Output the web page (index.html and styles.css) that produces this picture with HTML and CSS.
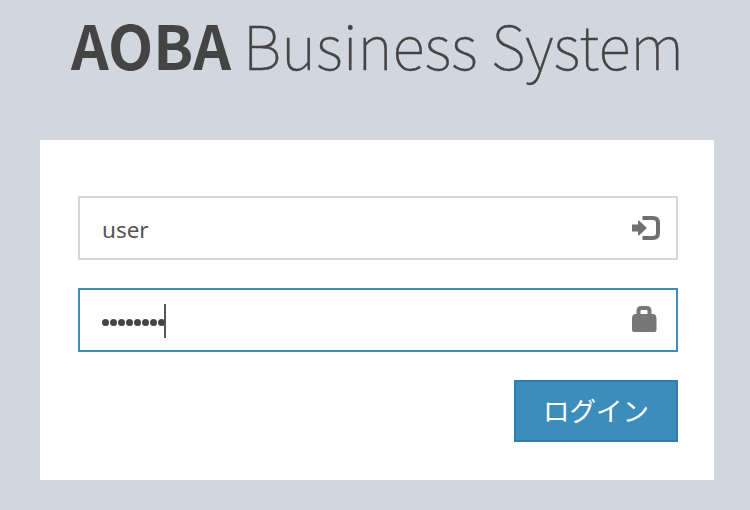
FILE: index.html
```
<!DOCTYPE html>
<html lang="ja">
<head>
<meta charset="utf-8">
<title>AOBA Business System</title>
<link rel="stylesheet" href="styles.css">
</head>
<body>
<main class="login">
  <h1 class="brand"><svg class="brand-text" viewBox="0 0 750 90"><text class="bold" x="71" y="69.500" textLength="160" lengthAdjust="spacingAndGlyphs">AOBA</text><text class="light" x="243" y="69.500" textLength="441" lengthAdjust="spacingAndGlyphs">Business System</text></svg></h1>
  <form class="panel">
    <div class="field">
      <span class="value">user</span>
      <svg class="icon" viewBox="0 0 32 32"><path d="M4 12.500h6V9.500q0-1.500 1.500-.5L19 16l-7.500 7q-1.500 1-1.500-.5v-3H4z" fill="#707070"/><path d="M14.500 6H25q5 0 5 5v10q0 5-5 5H14.500" fill="none" stroke="#707070" stroke-width="4"/></svg>
    </div>
    <div class="field focused">
      <span class="dots"><i></i><i></i><i></i><i></i><i></i><i></i><i></i><i></i></span><span class="caret"></span>
      <svg class="icon" viewBox="0 0 32 32"><path d="M8.500 10V7q0-5 5-5h5q5 0 5 5v3H26q2.500 1 2.500 4v12q0 2-2 2H6q-2 0-2-2V14q0-3 2.500-4zM12.500 10h7V7q0-1-1-1h-5q-1 0-1 1z" fill="#777" fill-rule="evenodd"/></svg>
    </div>
    <button class="submit" type="button"><span class="submit-label">ログイン</span></button>
  </form>
</main>
</body>
</html>
```
FILE: styles.css
```
* { box-sizing: border-box; }
body { margin: 0; background: #d2d6de; font-family: "Noto Sans", "Noto Sans CJK JP", sans-serif; color: #444; }
.login { height: 510px; padding: 0 36px 0 40px; overflow: hidden; }
.brand { margin: 0 -36px 50px -40px; height: 90px; }
.brand-text { display: block; width: 750px; height: 90px; fill: #444; font-family: "Noto Sans CJK JP", sans-serif; font-size: 60.5px; }
.bold { font-weight: 700; }
.light { font-weight: 100; stroke: #444; stroke-width: .4px; }
.panel { height: 340px; padding: 56px 36px 38px 38px; background: #fff; display: flex; flex-direction: column; }
.field { height: 64px; margin-bottom: 28px; padding: 0 16px 0 22px; border: 2px solid #d2d6de; display: flex; align-items: center; }
.focused { border-color: #3c8dbc; }
.value { padding-top: 3px; font-size: 22.5px; color: #555; }
.icon { width: 32px; height: 32px; margin-left: auto; }
.dots { display: flex; gap: 1px; padding-top: 5px; margin-right: -1px; }
.dots i { width: 7px; height: 7px; border-radius: 50%; background: #444; }
.caret { width: 2px; height: 34px; margin-top: 2px; background: #555; }
.submit { width: 164px; height: 62px; align-self: flex-end; border: 2px solid #2f7dae; background: #3c8dbc; color: #fff; font: 26.5px "Noto Sans CJK JP", sans-serif; padding: 0; }
.submit-label { display: block; padding-bottom: 4px; }
```
